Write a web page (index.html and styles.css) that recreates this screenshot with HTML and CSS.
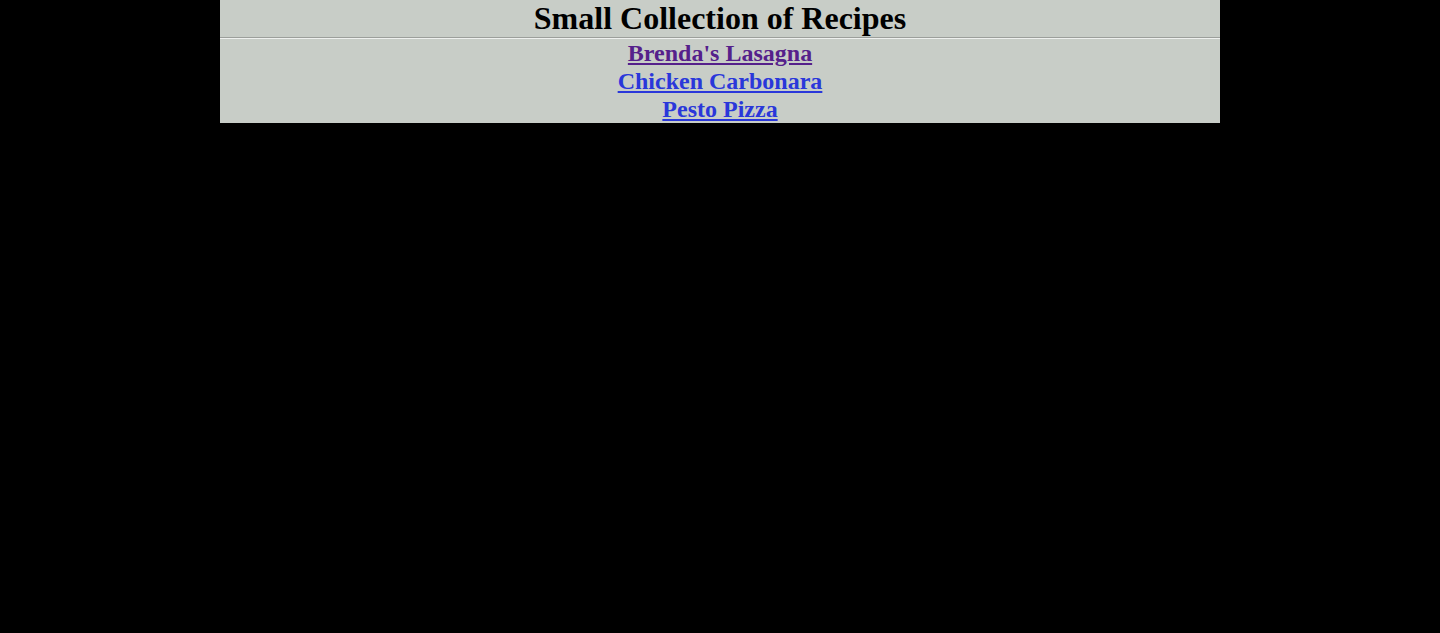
FILE: index.html
```html
<!DOCTYPE html>
<html>
<head>
<meta charset="utf-8">
<title>Small Collection of Recipes</title>
<link rel="stylesheet" href="styles.css">
</head>
<body>
<div class="page">
  <h1 class="title">Small Collection of Recipes</h1>
  <hr class="rule">
  <nav class="recipes">
    <a class="recipe visited" href="#lasagna">Brenda's Lasagna</a>
    <a class="recipe" href="#carbonara">Chicken Carbonara</a>
    <a class="recipe" href="#pizza">Pesto Pizza</a>
  </nav>
</div>
</body>
</html>
```

FILE: styles.css
```css
html, body {
  margin: 0;
  padding: 0;
  background: #000;
}
body {
  font-family: "Liberation Serif", "Times New Roman", serif;
}
.page {
  width: 1000px;
  margin: 0 auto;
  background: #c8cdc7;
  text-align: center;
}
.title {
  margin: 0;
  font-size: 32px;
  font-weight: bold;
  line-height: 37px;
  color: #000;
}
.rule {
  margin: 0;
  border: 0;
  border-top: 1px solid #9c9f9b;
  border-bottom: 1px solid #eef0ee;
  height: 0;
}
.recipes {
  display: flex;
  flex-direction: column;
  align-items: center;
}
.recipe {
  font-size: 24px;
  font-weight: bold;
  line-height: 28px;
  color: #2a37da;
  text-decoration: underline;
}
.recipe.visited {
  color: #55208b;
}
```
